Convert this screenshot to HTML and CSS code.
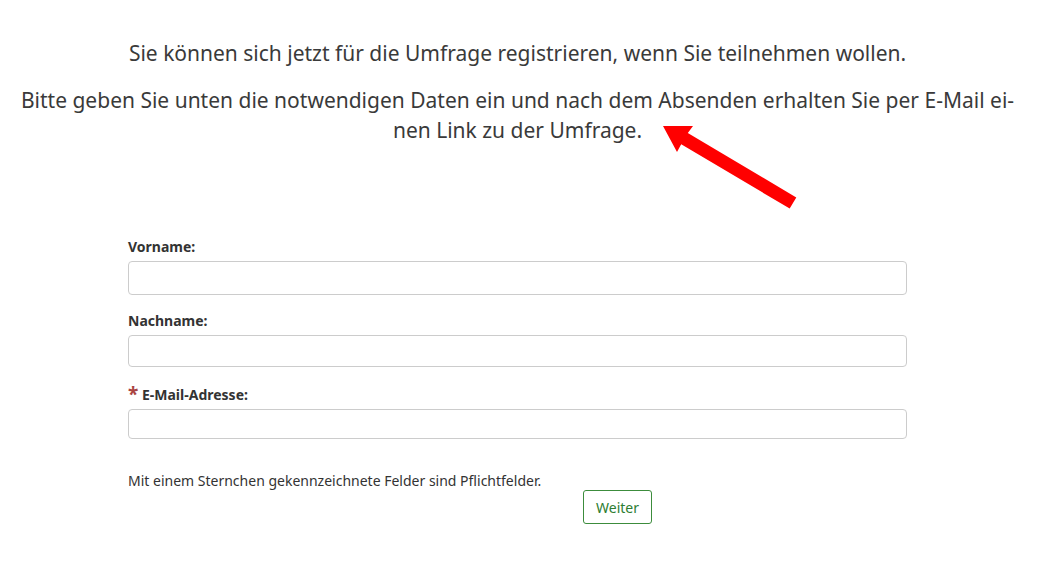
FILE: index.html
```html
<!DOCTYPE html>
<html lang="de">

<head>
  <meta charset="UTF-8">
  <meta name="viewport" content="width=device-width, initial-scale=1.0">
  <title>Registrierung</title>
  <link rel="stylesheet" href="styles.css">
</head>

<body>
  <div class="page">
    <div class="intro">
      <p>Sie können sich jetzt für die Umfrage registrieren, wenn Sie teilnehmen wollen.</p>
      <p>Bitte geben Sie unten die notwendigen Daten ein und nach dem Absenden erhalten Sie per E-Mail ei&shy;nen Link zu der Umfrage.</p>

      <!-- annotation arrow -->
      <svg class="arrow" width="160" height="110" viewBox="0 0 160 110">
        <polygon fill="#ff0000" points="13,16 43,16 37.8,23.1 146.3,87.4 139.7,98.6 31.2,34.3 27,42"></polygon>
      </svg>
    </div>

    <form class="register-form">
      <div class="field">
        <label for="firstname">Vorname:</label>
        <input type="text" id="firstname" class="input input-first">
      </div>
      <div class="field">
        <label for="lastname">Nachname:</label>
        <input type="text" id="lastname" class="input input-last">
      </div>
      <div class="field field-email">
        <label for="email"><span class="required">*</span> E-Mail-Adresse:</label>
        <input type="text" id="email" class="input input-email">
      </div>

      <div class="note">Mit einem Sternchen gekennzeichnete Felder sind Pflichtfelder.</div>

      <div class="actions">
        <button type="button" class="btn-next">Weiter</button>
      </div>
    </form>
  </div>
</body>

</html>
```

FILE: styles.css
```css
body {
  margin: 0;
  font-family: "Noto Sans", "Open Sans", sans-serif;
  color: #333;
  background-color: #fff;
}

.page {
  padding: 38px 34px 0 15px;
}

.intro {
  position: relative;
  text-align: center;
  font-size: 21px;
  line-height: 30px;
  color: #3a3a3a;
}

.intro p {
  margin: 0 0 17px;
}

.arrow {
  position: absolute;
  left: 635px;
  top: 72px;
}

.register-form {
  width: 779px;
  margin: 92px auto 0;
}

.field {
  display: flex;
  flex-direction: column;
  margin-bottom: 16px;
}

.field label {
  font-size: 14px;
  font-weight: bold;
  line-height: 20px;
  margin-bottom: 4px;
  color: #333;
}

.field-email label {
  margin-top: 2px;
  margin-bottom: 4px;
}

.required {
  color: #a94442;
  font-size: 19px;
  line-height: 14px;
  vertical-align: -1px;
}

.input {
  box-sizing: border-box;
  width: 100%;
  border: 1px solid #ccc;
  border-radius: 4px;
  background: #fff;
  padding: 4px 8px;
  font-size: 14px;
}

.input-first {
  height: 34px;
}

.input-last {
  height: 32px;
}

.input-email {
  height: 30px;
}

.note {
  margin-top: 32px;
  font-size: 14px;
  line-height: 20px;
  color: #333;
}

.actions {
  display: flex;
  justify-content: center;
  padding-left: 200px;
}

.btn-next {
  width: 69px;
  height: 34px;
  background: #fff;
  border: 1px solid #3c8c3c;
  border-radius: 3px;
  color: #2e7d32;
  font-family: "Noto Sans", "Open Sans", sans-serif;
  font-size: 14px;
  cursor: pointer;
  margin-top: -1px;
}
```
